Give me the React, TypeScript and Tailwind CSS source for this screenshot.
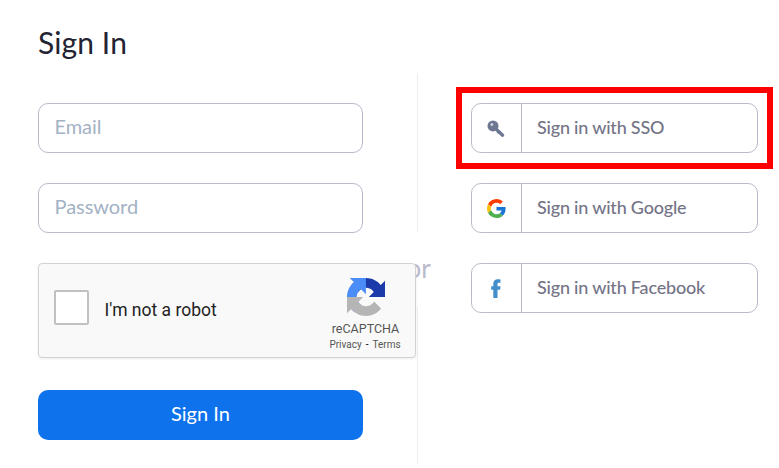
import type { ReactNode } from "react";

function Field({ placeholder, type, className }: { placeholder: string; type: string; className: string }) {
  return (
    <input
      type={type}
      placeholder={placeholder}
      className={`${className} block h-[50px] w-[325px] rounded-[10px] border border-[#babacc] bg-white px-[15.5px] pb-[5px] text-[20px] tracking-[-0.05px] text-[#232333] outline-none placeholder:text-[#a3b2c4]`}
    />
  );
}

function RecaptchaLogo() {
  return (
    <svg viewBox="0 0 64 64" className="ml-[1px] h-[38px] w-[38px]">
      <path fill="#1c3aa9" d="M64 31.955a33.28 33.28 0 0 0-.02-1.37V4.687l-7.16 7.16C50.964 4.674 42.05.093 32.064.093c-10.392 0-19.624 4.96-25.458 12.64l11.736 11.86a15.55 15.55 0 0 1 4.754-5.334c2.05-1.6 4.952-2.906 8.968-2.906.485 0 .86.057 1.135.163 4.976.393 9.288 3.14 11.828 7.124l-8.307 8.307L64 31.953" />
      <path fill="#4a8df6" d="M31.862.094a33.2 33.2 0 0 0-1.37.03H4.594l7.16 7.16C4.58 13.14 0 22.055 0 32.04c0 10.392 4.96 19.624 12.64 25.458L24.5 45.76a15.55 15.55 0 0 1-5.334-4.754c-1.6-2.05-2.906-4.952-2.906-8.968 0-.485.057-.86.163-1.135.393-4.976 3.14-9.288 7.124-11.828l8.307 8.307L31.86.095" />
      <path fill="#b5b5b5" d="M.001 32.045a33.3 33.3 0 0 0 .03 1.37v25.898l7.16-7.16c5.856 7.174 14.77 11.755 24.756 11.755 10.392 0 19.624-4.96 25.458-12.64l-11.736-11.86c-1.15 2.127-2.784 3.954-4.754 5.334-2.05 1.6-4.952 2.906-8.968 2.906-.485 0-.86-.057-1.135-.163-4.976-.393-9.288-3.14-11.828-7.124l8.307-8.307-27.295.04" />
    </svg>
  );
}

function Recaptcha() {
  return (
    <div className="mt-[30px] flex h-[95px] w-[378px] rounded-[4px] border border-[#d3d3d3] bg-[#f9f9f9] font-['Roboto',sans-serif] shadow-[0_1px_3px_0_rgba(0,0,0,0.08)]">
      <div className="mt-[26px] ml-[15px] h-[35px] w-[35px] rounded-[2px] border-2 border-[#c1c1c1] bg-white" />
      <div className="mt-[35px] ml-[15.5px] text-[17.5px] leading-[22px] text-[#222]">I'm not a robot</div>
      <div className="mt-[14px] mr-[11px] ml-auto flex w-[78px] flex-col items-center text-[#555]">
        <RecaptchaLogo />
        <div className="mt-[5px] ml-[1px] text-[12.5px] leading-[16px]">reCAPTCHA</div>
        <div className="mt-[2px] text-[10px] leading-[12px] whitespace-nowrap">Privacy<span className="mx-[4px] text-black">-</span>Terms</div>
      </div>
    </div>
  );
}

function KeyIcon() {
  return (
    <svg viewBox="0 0 18 18" className="h-[18px] w-[18px]">
      <path d="M8 8 15.6 15.2" stroke="#6e7892" strokeWidth="3.3" strokeLinecap="round" />
      <path d="m10.4 13.2 2-2" stroke="#6e7892" strokeWidth="2" />
      <circle cx="6" cy="5.9" r="5.5" fill="#6e7892" />
      <circle cx="4.9" cy="4.6" r="1.4" fill="#d9dde6" />
    </svg>
  );
}

function GoogleIcon() {
  return (
    <svg viewBox="0 0 48 48" className="mb-px h-[19px] w-[19px]">
      <path fill="#ff3d00" d="M24 9.5c3.54 0 6.71 1.22 9.21 3.6l6.85-6.85C35.9 2.38 30.47 0 24 0 14.62 0 6.51 5.38 2.56 13.22l7.98 6.19C12.43 13.72 17.74 9.5 24 9.5" />
      <path fill="#1976d2" d="M46.98 24.55c0-1.57-.15-3.09-.38-4.55H24v9.02h12.94c-.58 2.96-2.26 5.48-4.78 7.18l7.73 6c4.51-4.18 7.09-10.36 7.09-17.65" />
      <path fill="#ffc107" d="M10.53 28.59A14.5 14.5 0 0 1 9.77 24c0-1.6.27-3.14.76-4.59l-7.98-6.19A23.9 23.9 0 0 0 0 24c0 3.88.92 7.54 2.56 10.78z" />
      <path fill="#4caf50" d="M24 48c6.48 0 11.93-2.13 15.89-5.81l-7.73-6c-2.15 1.45-4.92 2.3-8.16 2.3-6.26 0-11.57-4.22-13.47-9.91l-7.98 6.19C6.51 42.62 14.62 48 24 48" />
    </svg>
  );
}

function FacebookIcon() {
  return (
    <svg viewBox="0 0 10 19" className="h-[19px] w-[10px]">
      <path fill="#428fcb" d="M2.3 19v-8.2H.2V7.2h2.1V4.6C2.3 1.8 4 .2 6.7.2c1.1 0 2 .1 2.8.2v3.4H7.9c-1.2 0-1.4.6-1.4 1.5v1.9h3l-.4 3.6H6.5V19z" />
    </svg>
  );
}

function Provider({ icon, label }: { icon: ReactNode; label: string }) {
  return (
    <button type="button" className="flex h-[50px] w-[287px] items-stretch rounded-[10px] border border-[#babacc] bg-white">
      <span className="flex w-[50px] items-center justify-center border-r border-[#babacc] pt-px pr-px">{icon}</span>
      <span className="pt-[10px] pl-[15px] text-[18px] leading-[26px] font-medium tracking-[-0.2px] text-[#747487]">{label}</span>
    </button>
  );
}

export default function App() {
  return (
    <main className="flex h-[468px] w-[779px] overflow-hidden bg-white pl-[38px] font-['Lato',sans-serif]">
      <form className="z-10 w-[325px] shrink-0 pt-[24px]">
        <h1 className="h-[79px] text-[30px] leading-[36px] tracking-[0.1px] text-[#232333]">Sign In</h1>
        <Field type="email" placeholder="Email" className="" />
        <Field type="password" placeholder="Password" className="mt-[30px]" />
        <Recaptcha />
        <button type="button" className="mt-[32px] block h-[50px] w-[325px] rounded-[10px] bg-[#0e72ed] pb-[4px] text-[20px] text-white">Sign In</button>
      </form>
      <div className="ml-[34px] flex w-[40px] shrink-0 flex-col items-center pt-[73px]">
        <div className="h-[159px] w-px bg-[#ededf4]" />
        <div className="flex h-[75px] items-center pb-[3px] pl-[3px] text-[26px] text-[#babacc]">or</div>
        <div className="h-[157px] w-px bg-[#ededf4]" />
      </div>
      <section className="ml-[19px] w-[317px] pt-[87px]">
        <div className="h-[82px] border-[6px] border-[#ff0000] pt-[10px] pl-[9px]">
          <Provider icon={<KeyIcon />} label="Sign in with SSO" />
        </div>
        <div className="mt-[14px] flex flex-col gap-[30px] pl-[15px]">
          <Provider icon={<GoogleIcon />} label="Sign in with Google" />
          <Provider icon={<FacebookIcon />} label="Sign in with Facebook" />
        </div>
      </section>
    </main>
  );
}
